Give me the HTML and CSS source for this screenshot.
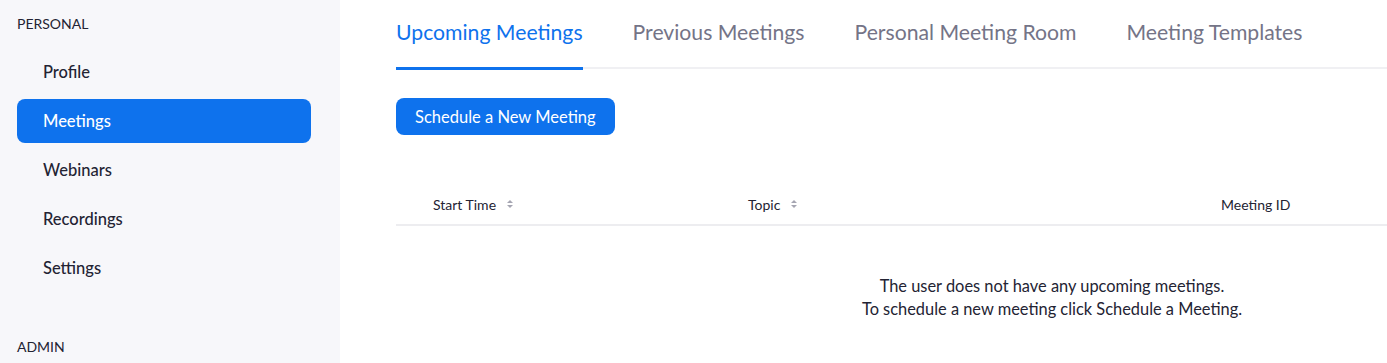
FILE: index.html
```html
<!DOCTYPE html>
<html lang="en">

<head>
  <meta charset="UTF-8">
  <meta name="viewport" content="width=device-width, initial-scale=1.0">
  <title>Meetings</title>
  <link rel="stylesheet" href="styles.css">
</head>

<body>
  <div class="layout">
    <aside class="sidebar">
      <div class="section-title">PERSONAL</div>
      <ul class="nav">
        <li class="nav-item">Profile</li>
        <li class="nav-item active">Meetings</li>
        <li class="nav-item">Webinars</li>
        <li class="nav-item">Recordings</li>
        <li class="nav-item">Settings</li>
      </ul>
      <div class="section-title admin">ADMIN</div>
    </aside>

    <main class="content">
      <div class="tabs">
        <div class="tab active">Upcoming Meetings</div>
        <div class="tab">Previous Meetings</div>
        <div class="tab">Personal Meeting Room</div>
        <div class="tab">Meeting Templates</div>
      </div>

      <button class="btn-primary" type="button">Schedule a New Meeting</button>

      <div class="meetings-table">
        <div class="table-head">
          <div class="col col-time">Start Time
            <svg class="sort" width="6" height="10" viewBox="0 0 6 10">
              <path d="M3 1 L6 4 L0 4 Z" fill="#a5a5b2" />
              <path d="M3 9 L6 6 L0 6 Z" fill="#a5a5b2" />
            </svg>
          </div>
          <div class="col col-topic">Topic
            <svg class="sort" width="6" height="10" viewBox="0 0 6 10">
              <path d="M3 1 L6 4 L0 4 Z" fill="#a5a5b2" />
              <path d="M3 9 L6 6 L0 6 Z" fill="#a5a5b2" />
            </svg>
          </div>
          <div class="col col-id">Meeting ID</div>
        </div>
        <div class="empty">
          <p>The user does not have any upcoming meetings.</p>
          <p>To schedule a new meeting click Schedule a Meeting.</p>
        </div>
      </div>
    </main>
  </div>
</body>

</html>
```

FILE: styles.css
```css
body {
  margin: 0;
  padding: 0;
  font-family: Lato, "Open Sans", sans-serif;
  color: #232333;
  background-color: #fff;
  overflow: hidden;
}

.layout {
  display: flex;
  height: 363px;
}

.sidebar {
  width: 340px;
  flex-shrink: 0;
  background-color: #f7f7fa;
  box-sizing: border-box;
  padding: 15px 0 0 17px;
}

.section-title {
  font-size: 14px;
  line-height: 18px;
  color: #232333;
}

.section-title.admin {
  margin-top: 48px;
}

.nav {
  list-style: none;
  margin: 17px 0 0;
  padding: 0;
}

.nav-item {
  width: 294px;
  height: 44px;
  line-height: 44px;
  box-sizing: border-box;
  padding-left: 26px;
  margin-bottom: 5px;
  font-size: 16.5px;
  font-weight: 500;
  color: #232333;
  border-radius: 8px;
}

.nav-item.active {
  background-color: #0e72ed;
  color: #fff;
}

.content {
  flex: 1;
  padding-left: 56px;
  overflow: hidden;
}

/* tab bar: grey rule under everything, blue bar under the active tab */
.tabs {
  display: flex;
  gap: 50px;
  height: 67px;
  border-bottom: 2px solid #f0f0f3;
}

.tab {
  font-size: 21.2px;
  line-height: 21px;
  padding-top: 22px;
  color: #747487;
  white-space: nowrap;
  border-bottom: 3px solid transparent;
  margin-bottom: -3px;
}

.tab.active {
  color: #0e72ed;
  border-bottom-color: #0e72ed;
}

.btn-primary {
  display: block;
  margin-top: 29px;
  height: 37px;
  padding: 0 19px;
  font-family: Lato, "Open Sans", sans-serif;
  font-size: 16.5px;
  color: #fff;
  background-color: #0e72ed;
  border: none;
  border-radius: 8px;
  cursor: pointer;
}

.meetings-table {
  width: 1312px;
  margin-top: 51px;
}

.table-head {
  display: flex;
  border-bottom: 2px solid #ededf0;
  height: 36px;
  align-items: center;
  padding-bottom: 2px;
}

.col {
  font-size: 14px;
  color: #232333;
  padding-left: 37px;
  box-sizing: border-box;
  display: flex;
  align-items: center;
}

.col-time {
  width: 315px;
}

.col-topic {
  width: 473px;
}

.sort {
  margin-left: 11px;
}

.empty {
  text-align: center;
  padding-top: 48px;
  font-size: 16.4px;
}

.empty p {
  margin: 0;
  line-height: 23px;
}
```
